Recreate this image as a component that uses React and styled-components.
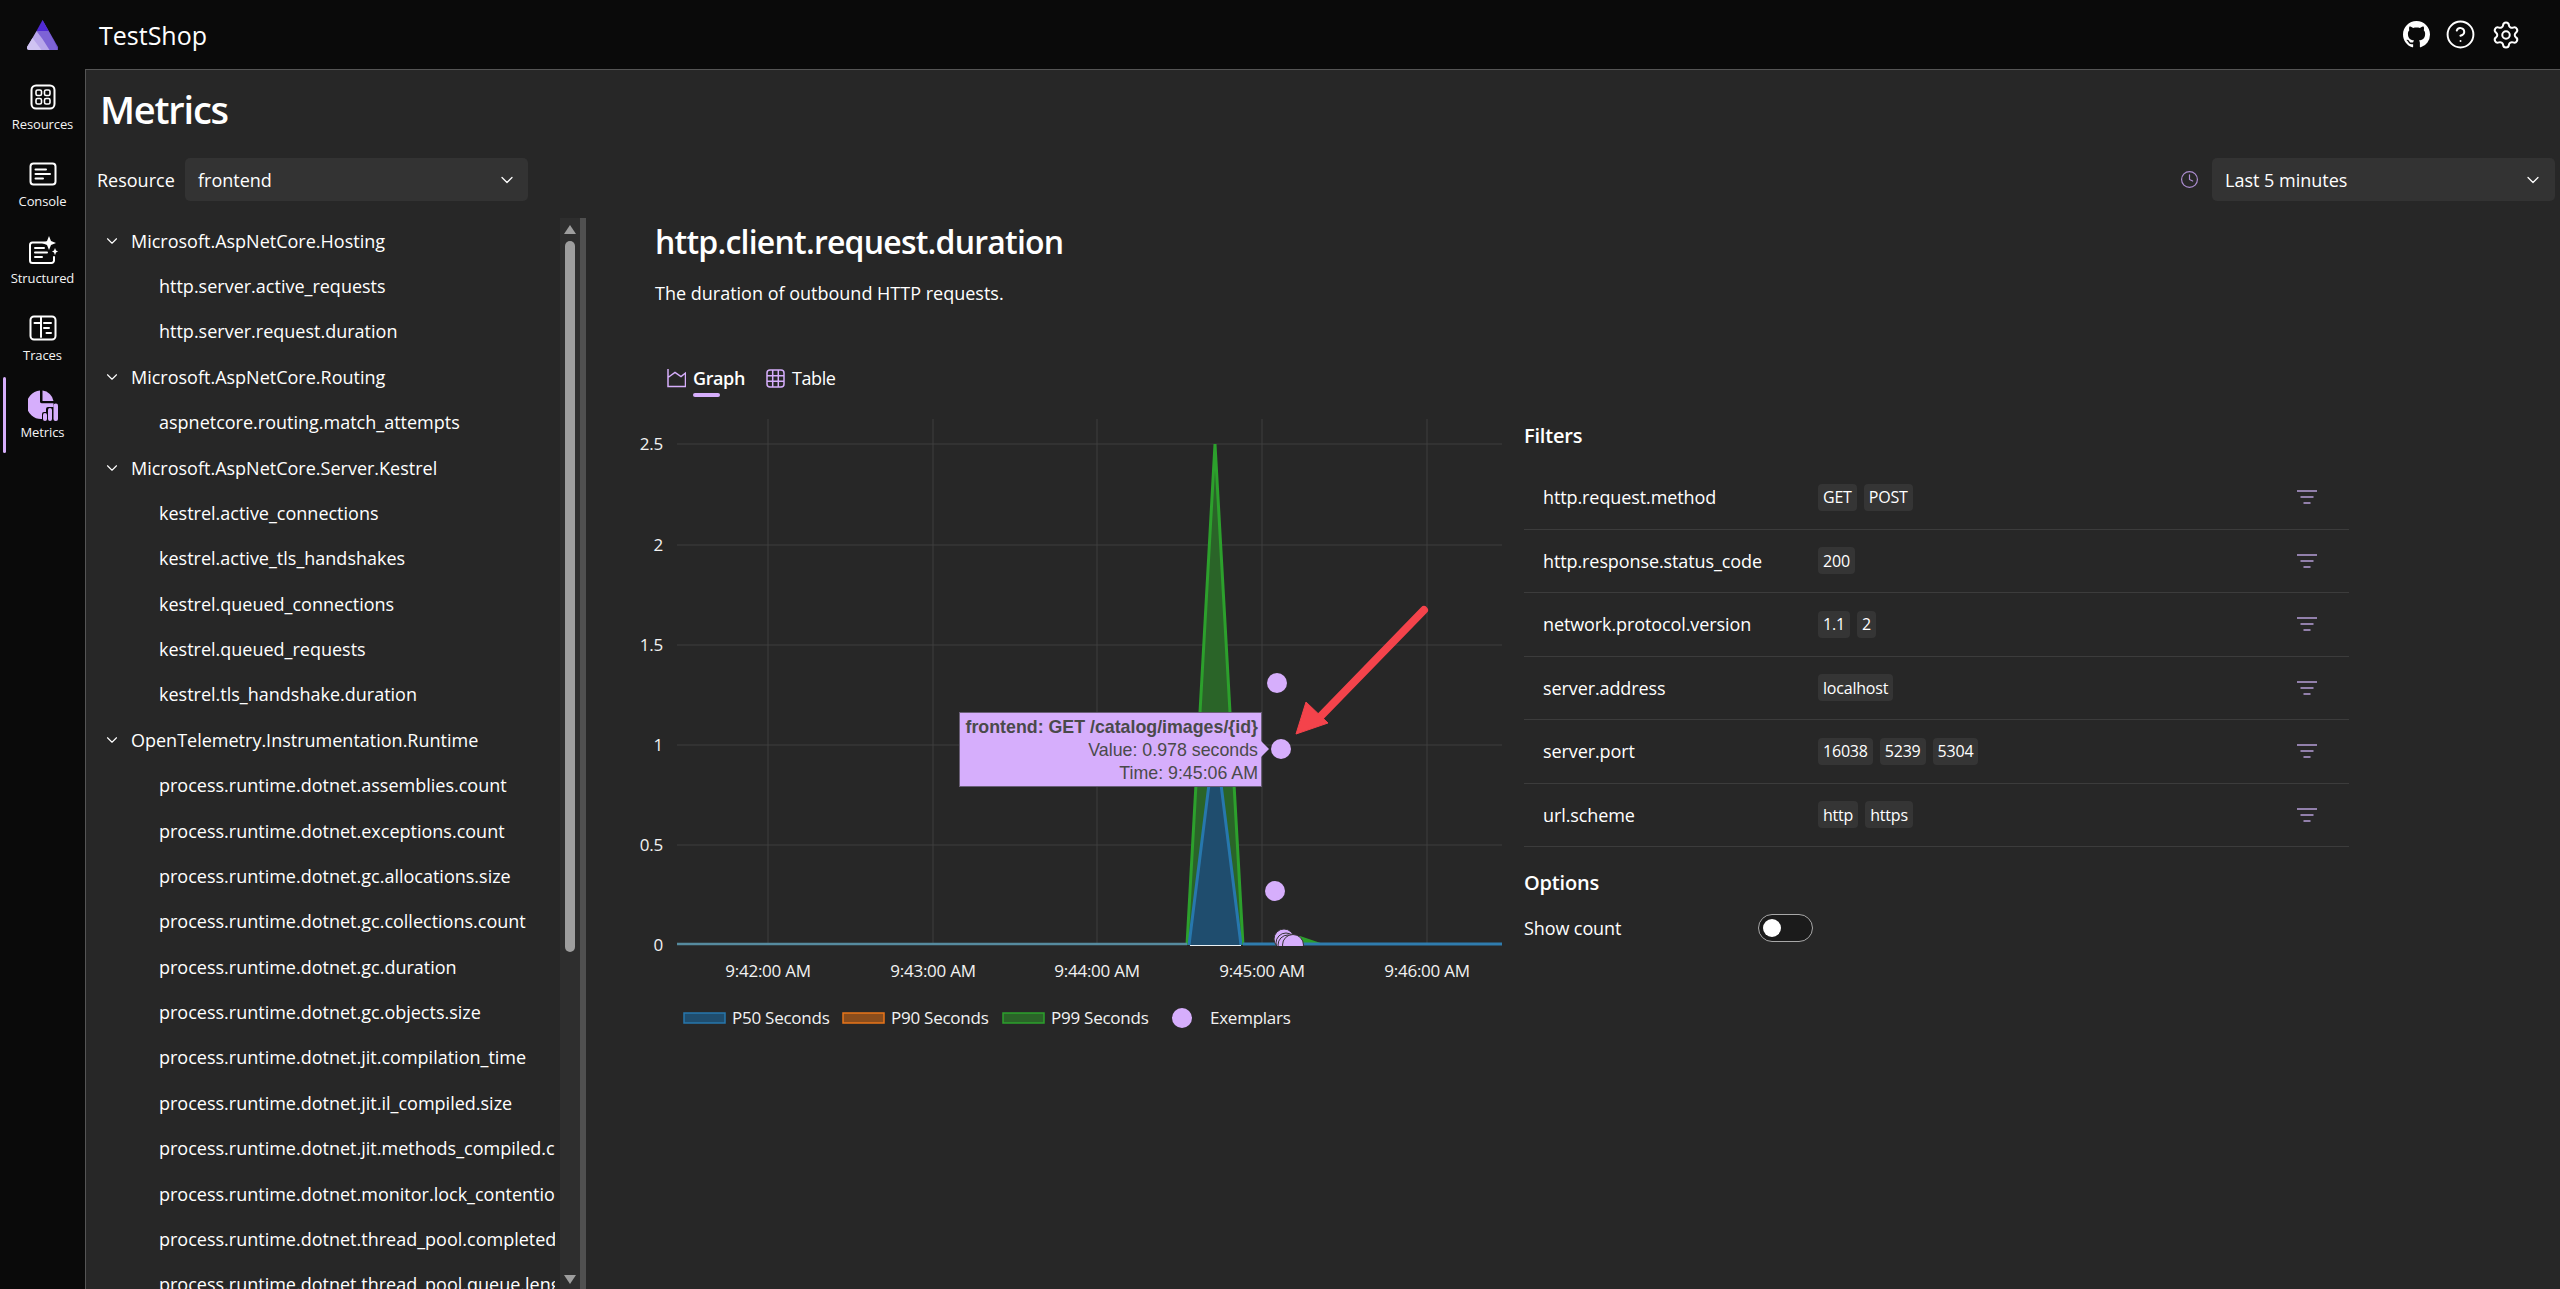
import React from 'react';
import styled, { createGlobalStyle } from 'styled-components';
import { BsGithub } from 'react-icons/bs';
import { ChevronDown, CircleHelp, Clock, Settings } from 'lucide-react';

const accent = '#d6aefc';
const uiFont = '"Open Sans", "Noto Sans", sans-serif';

const GlobalStyle = createGlobalStyle`
  html, body {
    margin: 0;
    height: 1289px;
    overflow: hidden;
    background: #0a0a0a;
    color: #fff;
    font-family: ${uiFont};
  }
  * { box-sizing: border-box; }
`;

const treeData = [
  { name: 'Microsoft.AspNetCore.Hosting', items: ['http.server.active_requests', 'http.server.request.duration'] },
  { name: 'Microsoft.AspNetCore.Routing', items: ['aspnetcore.routing.match_attempts'] },
  {
    name: 'Microsoft.AspNetCore.Server.Kestrel',
    items: [
      'kestrel.active_connections',
      'kestrel.active_tls_handshakes',
      'kestrel.queued_connections',
      'kestrel.queued_requests',
      'kestrel.tls_handshake.duration',
    ],
  },
  {
    name: 'OpenTelemetry.Instrumentation.Runtime',
    items: [
      'process.runtime.dotnet.assemblies.count',
      'process.runtime.dotnet.exceptions.count',
      'process.runtime.dotnet.gc.allocations.size',
      'process.runtime.dotnet.gc.collections.count',
      'process.runtime.dotnet.gc.duration',
      'process.runtime.dotnet.gc.objects.size',
      'process.runtime.dotnet.jit.compilation_time',
      'process.runtime.dotnet.jit.il_compiled.size',
      'process.runtime.dotnet.jit.methods_compiled.count',
      'process.runtime.dotnet.monitor.lock_contention.count',
      'process.runtime.dotnet.thread_pool.completed_items.count',
      'process.runtime.dotnet.thread_pool.queue.length',
    ],
  },
];

const filters = [
  { name: 'http.request.method', values: ['GET', 'POST'] },
  { name: 'http.response.status_code', values: ['200'] },
  { name: 'network.protocol.version', values: ['1.1', '2'] },
  { name: 'server.address', values: ['localhost'] },
  { name: 'server.port', values: ['16038', '5239', '5304'] },
  { name: 'url.scheme', values: ['http', 'https'] },
];

const Logo = () => (
  <svg width="33" height="30" viewBox="0 0 32 30">
    <path d="M16 0 L31.5 27 Q32 30 29 30 L16 30 Z" fill="#6a4bc4" />
    <path d="M16 0 L10 11 L22 11 Z" fill="#512bd4" />
    <path d="M10 11 L22 11 L28 22 L31.5 30 L16 30 Z" fill="#7d63d6" />
    <path d="M10 11 L3 23 L0.5 27 Q0 30 3 30 L23 30 L16 19 Z" fill="#b8a6ea" />
    <path d="M6 18 L0.5 27 Q0 30 3 30 L15 30 Z" fill="#cfc3f2" />
  </svg>
);

const ResourcesIcon = () => (
  <svg width="26" height="26" viewBox="0 0 26 26" fill="none" stroke="#fff" strokeWidth="2">
    <rect x="1.5" y="1.5" width="23" height="23" rx="4.5" />
    <rect x="6" y="6" width="5.5" height="5.5" rx="1.6" strokeWidth="1.6" />
    <rect x="14.5" y="6" width="5.5" height="5.5" rx="1.6" strokeWidth="1.6" />
    <rect x="6" y="14.5" width="5.5" height="5.5" rx="1.6" strokeWidth="1.6" />
    <rect x="14.5" y="14.5" width="5.5" height="5.5" rx="1.6" strokeWidth="1.6" />
  </svg>
);

const ConsoleIcon = () => (
  <svg width="28" height="26" viewBox="0 0 28 26" fill="none" stroke="#fff" strokeWidth="2" strokeLinecap="round">
    <rect x="1.5" y="2.5" width="25" height="21" rx="3" />
    <path d="M6.5 8.5H17M6.5 13H21M6.5 17.5H14" />
  </svg>
);

const StructuredIcon = () => (
  <svg width="30" height="30" viewBox="0 0 30 30" fill="none" stroke="#fff" strokeWidth="2" strokeLinecap="round">
    <path d="M17 6.5H4.5a2.5 2.5 0 0 0-2.5 2.5v15.5a2.5 2.5 0 0 0 2.5 2.5h19a2.5 2.5 0 0 0 2.5-2.5V21" />
    <path d="M7 12H16M7 16.5H19M7 21H14" />
    <path d="M21 0l2 5 5 2-5 2-2 5-2-5-5-2 5-2z" fill="#fff" stroke="none" />
    <path d="M27 12l1 2.6 2 1-2 1-1 2.6-1-2.6-2-1 2-1z" fill="#fff" stroke="none" />
  </svg>
);

const TracesIcon = () => (
  <svg width="28" height="26" viewBox="0 0 28 26" fill="none" stroke="#fff" strokeWidth="2" strokeLinecap="round">
    <rect x="1.5" y="1.5" width="25" height="23" rx="3.5" />
    <path d="M5.5 8H12M12 2v20M15 8H22M15 13H20M17.5 18H22" />
  </svg>
);

const MetricsIcon = () => (
  <svg width="30" height="32" viewBox="0 0 30 32" fill={accent}>
    <path d="M12 1.5v11c0 1 .7 1.7 1.7 1.7H25.5V18H20a2 2 0 0 0-2 2v3h-2a2 2 0 0 0-2 2v5A14 14 0 0 1 12 1.5z" />
    <path d="M14.5 1.5a12.5 12.5 0 0 1 11 10.5h-11z" />
    <rect x="15" y="24" width="4" height="8" rx="2" />
    <rect x="20" y="19" width="4" height="13" rx="2" />
    <rect x="25.5" y="14.5" width="4.5" height="17.5" rx="2" />
  </svg>
);

const GraphIcon = () => (
  <svg width="19" height="20" viewBox="0 0 19 20" fill="none" stroke={accent} strokeWidth="1.5">
    <path d="M1 1V18.5H18.5V5L14 8.5L8 4.5L1 9.5" />
  </svg>
);

const TableIcon = () => (
  <svg width="19" height="19" viewBox="0 0 19 19" fill="none" stroke={accent} strokeWidth="1.5">
    <rect x="1" y="1" width="17" height="17" rx="3" />
    <path d="M6.7 1V18M12.3 1V18M1 6.7H18M1 12.3H18" />
  </svg>
);

const FilterIcon = () => (
  <svg width="20" height="14" viewBox="0 0 20 14" fill="none" stroke="#b79fd8" strokeWidth="1.5">
    <path d="M0 1H20M3.5 7H16.5M6.5 13H13.5" />
  </svg>
);

const navItems = [
  { label: 'Resources', Icon: ResourcesIcon },
  { label: 'Console', Icon: ConsoleIcon },
  { label: 'Structured', Icon: StructuredIcon },
  { label: 'Traces', Icon: TracesIcon },
  { label: 'Metrics', Icon: MetricsIcon, active: true },
];

const yTicks = [
  { label: '2.5', y: 444 },
  { label: '2', y: 545 },
  { label: '1.5', y: 645 },
  { label: '1', y: 745 },
  { label: '0.5', y: 845 },
  { label: '0', y: 945 },
];

const xTicks = [
  { label: '9:42:00 AM', x: 768 },
  { label: '9:43:00 AM', x: 933 },
  { label: '9:44:00 AM', x: 1097 },
  { label: '9:45:00 AM', x: 1262 },
  { label: '9:46:00 AM', x: 1427 },
];

const Chart = () => (
  <ChartSvg viewBox="630 410 880 640" width="880" height="640">
    {yTicks.map((t) => (
      <g key={t.label}>
        {t.y !== 945 && <line x1="677" x2="1502" y1={t.y} y2={t.y} stroke="#3f3f3f" strokeWidth="1" />}
        <text x="663" y={t.y + 6} textAnchor="end" fill="#f2f2f2" fontSize="17">{t.label}</text>
      </g>
    ))}
    {xTicks.map((t) => (
      <g key={t.label}>
        <line x1={t.x} x2={t.x} y1="419" y2="945" stroke="#3f3f3f" strokeWidth="1" />
        <text x={t.x} y="977" textAnchor="middle" fill="#f2f2f2" fontSize="17">{t.label}</text>
      </g>
    ))}

    <path d="M1187 945L1215 444L1243 945Z" fill="#2a6428" />
    <path d="M1187 945L1215 444L1243 945" fill="none" stroke="#2ca02c" strokeWidth="3" />
    <path d="M1285 936L1300 936L1325 944.5L1285 944.5Z" fill="#2ca02c" />
    <path d="M1189 945L1215 736L1241 945Z" fill="#1f4d6e" />
    <path d="M1189 945L1215 736L1241 945" fill="none" stroke="#2777ad" strokeWidth="3" />
    <line x1="677" x2="1187" y1="944" y2="944" stroke="#568b9f" strokeWidth="2.5" />
    <line x1="1243" x2="1502" y1="944" y2="944" stroke="#2f7cae" strokeWidth="3" />
    <line x1="1190" x2="1241" y1="945.5" y2="945.5" stroke="#e8f0f4" strokeWidth="1" />

    <clipPath id="plot">
      <rect x="677" y="419" width="825" height="527" />
    </clipPath>
    <g clipPath="url(#plot)" fill={accent}>
      <circle cx="1277" cy="683" r="10" />
      <circle cx="1275" cy="891" r="10" />
      <circle cx="1284" cy="939" r="10" stroke="#333" strokeWidth="1" />
      <circle cx="1286" cy="943" r="10" stroke="#333" strokeWidth="1" />
      <circle cx="1288" cy="945" r="10" stroke="#333" strokeWidth="1" />
      <circle cx="1293" cy="945" r="10.5" stroke="#333" strokeWidth="1" />
      <circle cx="1281" cy="749" r="10" />
    </g>

    <path d="M1424 610L1318 719" stroke="#f4434b" strokeWidth="8" strokeLinecap="round" />
    <path d="M1296 734L1306 702L1328 723Z" fill="#f4434b" stroke="#f4434b" strokeWidth="1" />

    <rect x="684" y="1013" width="41" height="10" fill="#1f4d6e" stroke="#2777ad" strokeWidth="1.5" />
    <text x="732" y="1024" fill="#f2f2f2" fontSize="17">P50 Seconds</text>
    <rect x="843" y="1013" width="41" height="10" fill="#8a4d1c" stroke="#e8751a" strokeWidth="1.5" />
    <text x="891" y="1024" fill="#f2f2f2" fontSize="17">P90 Seconds</text>
    <rect x="1003" y="1013" width="41" height="10" fill="#2a6428" stroke="#2ca02c" strokeWidth="1.5" />
    <text x="1051" y="1024" fill="#f2f2f2" fontSize="17">P99 Seconds</text>
    <circle cx="1182" cy="1018" r="10" fill={accent} />
    <text x="1210" y="1024" fill="#f2f2f2" fontSize="17">Exemplars</text>
  </ChartSvg>
);

export default function App() {
  return (
    <>
      <GlobalStyle />
      <Shell>
        <TopBar>
          <LogoCell><Logo /></LogoCell>
          <AppName>TestShop</AppName>
          <TopIcons>
            <BsGithub size={27} color="#fff" />
            <CircleHelp size={31} color="#fff" strokeWidth={1.5} />
            <Settings size={30} color="#fff" strokeWidth={1.6} />
          </TopIcons>
        </TopBar>
        <Body>
          <Nav>
            {navItems.map(({ label, Icon, active }) => (
              <NavItem key={label} $active={active}>
                <NavIcon><Icon /></NavIcon>
                <NavLabel>{label}</NavLabel>
              </NavItem>
            ))}
          </Nav>
          <Main>
            <PageTitle>Metrics</PageTitle>
            <Toolbar>
              <ToolbarLabel>Resource</ToolbarLabel>
              <Select>
                frontend
                <ChevronDown size={20} strokeWidth={1.5} />
              </Select>
              <ToolbarSpacer />
              <Clock size={19} color="#ab8ccf" strokeWidth={1.5} />
              <Select $wide>
                Last 5 minutes
                <ChevronDown size={20} strokeWidth={1.5} />
              </Select>
            </Toolbar>
            <Content>
              <TreePane>
                <Tree>
                  {treeData.map((group) => (
                    <React.Fragment key={group.name}>
                      <TreeRow>
                        <TreeChevron><ChevronDown size={18} strokeWidth={1.5} /></TreeChevron>
                        <span>{group.name}</span>
                      </TreeRow>
                      {group.items.map((item) => (
                        <TreeRow key={item} $leaf>{item}</TreeRow>
                      ))}
                    </React.Fragment>
                  ))}
                </Tree>
                <Scrollbar>
                  <ScrollArrow />
                  <ScrollThumb />
                  <ScrollArrow $down />
                </Scrollbar>
                <ScrollEdge />
              </TreePane>
              <Detail>
                <MetricTitle>http.client.request.duration</MetricTitle>
                <MetricDesc>The duration of outbound HTTP requests.</MetricDesc>
                <Tabs>
                  <Tab $active><GraphIcon /><TabText $active>Graph</TabText></Tab>
                  <Tab><TableIcon /><TabText>Table</TabText></Tab>
                </Tabs>
                <ChartRow>
                  <ChartArea>
                    <Chart />
                    <Tooltip>
                      <strong>frontend: GET /catalog/images/{'{id}'}</strong>
                      <span>Value: 0.978 seconds</span>
                      <span>Time: 9:45:06 AM</span>
                    </Tooltip>
                  </ChartArea>
                  <Side>
                    <SideHeading>Filters</SideHeading>
                    <FilterList>
                      {filters.map((f) => (
                        <FilterRow key={f.name}>
                          <FilterName>{f.name}</FilterName>
                          <Chips>
                            {f.values.map((v) => <Chip key={v}>{v}</Chip>)}
                          </Chips>
                          <FilterIcon />
                        </FilterRow>
                      ))}
                    </FilterList>
                    <OptionsHeading>Options</OptionsHeading>
                    <OptionRow>
                      <OptionLabel>Show count</OptionLabel>
                      <Toggle />
                    </OptionRow>
                  </Side>
                </ChartRow>
              </Detail>
            </Content>
          </Main>
        </Body>
      </Shell>
    </>
  );
}

const Shell = styled.div`
  width: 2560px;
  height: 1289px;
  display: flex;
  flex-direction: column;
  overflow: hidden;
`;

const TopBar = styled.header`
  height: 69px;
  flex: none;
  display: flex;
  align-items: center;
  background: #0a0a0a;
`;

const LogoCell = styled.div`
  width: 99px;
  padding-left: 26px;
  display: flex;
`;

const AppName = styled.div`
  font-size: 25px;
  color: #fff;
`;

const TopIcons = styled.div`
  margin-left: auto;
  padding-right: 39px;
  display: flex;
  align-items: center;
  gap: 15px;
`;

const Body = styled.div`
  flex: 1;
  display: flex;
  min-height: 0;
`;

const Nav = styled.nav`
  width: 85px;
  flex: none;
  background: #0a0a0a;
  padding-top: 10px;
`;

const NavItem = styled.div`
  position: relative;
  height: 77px;
  display: flex;
  flex-direction: column;
  align-items: center;

  &::before {
    content: '';
    display: ${(p) => (p.$active ? 'block' : 'none')};
    position: absolute;
    left: 3px;
    top: -10px;
    width: 3px;
    height: 76px;
    border-radius: 2px;
    background: ${accent};
  }
`;

const NavIcon = styled.div`
  height: 36px;
  display: flex;
  align-items: center;
  justify-content: center;
`;

const NavLabel = styled.div`
  font-size: 13px;
  line-height: 18px;
  letter-spacing: -0.1px;
  color: #f4f4f4;
`;

const Main = styled.main`
  flex: 1;
  min-width: 0;
  background: #272727;
  border-top: 1px solid #555;
  border-left: 1px solid #555;
`;

const PageTitle = styled.h1`
  margin: 14px 0 0 14px;
  font-size: 38px;
  line-height: 50px;
  font-weight: 600;
  letter-spacing: -1.2px;
`;

const Toolbar = styled.div`
  margin-top: 24px;
  padding: 0 5px 0 11px;
  display: flex;
  align-items: center;
  font-size: 18px;
`;

const ToolbarLabel = styled.div`
  width: 88px;
`;

const ToolbarSpacer = styled.div`
  flex: 1;
`;

const Select = styled.div`
  width: 343px;
  height: 43px;
  margin-left: ${(p) => (p.$wide ? 13 : 0)}px;
  padding: 0 ${(p) => (p.$wide ? 12 : 11)}px 0 ${(p) => (p.$wide ? 13 : 13)}px;
  display: flex;
  align-items: center;
  justify-content: space-between;
  background: #333;
  border-radius: 5px;
  font-size: 18px;
`;

const Content = styled.div`
  margin-top: 17px;
  display: flex;
  align-items: flex-start;
`;

const TreePane = styled.div`
  width: 500px;
  height: 1071px;
  flex: none;
  display: flex;
`;

const Tree = styled.div`
  width: 469px;
  height: 100%;
  overflow: hidden;
  flex: none;
`;

const TreeRow = styled.div`
  height: 45.38px;
  display: flex;
  align-items: center;
  white-space: nowrap;
  font-size: 18px;
  padding-left: ${(p) => (p.$leaf ? 73 : 17)}px;
`;

const TreeChevron = styled.span`
  width: 28px;
  display: flex;
  align-items: center;
`;

const Scrollbar = styled.div`
  width: 20px;
  margin-left: 5px;
  flex: none;
  background: #2e2e2e;
  display: flex;
  flex-direction: column;
  align-items: center;
  position: relative;
`;

const ScrollArrow = styled.div`
  position: absolute;
  ${(p) => (p.$down ? 'bottom: 5px;' : 'top: 7px;')}
  border-left: 6px solid transparent;
  border-right: 6px solid transparent;
  ${(p) => (p.$down ? 'border-top' : 'border-bottom')}: 9px solid #9e9e9e;
`;

const ScrollThumb = styled.div`
  width: 10px;
  height: 711px;
  margin-top: 23px;
  border-radius: 5px;
  background: #9e9e9e;
`;

const ScrollEdge = styled.div`
  width: 6px;
  flex: none;
  background: #505050;
`;

const Detail = styled.section`
  flex: 1;
  min-width: 0;
  padding-top: 2px;
`;

const MetricTitle = styled.h2`
  margin: 0 0 0 69px;
  font-size: 32px;
  line-height: 44px;
  font-weight: 600;
  letter-spacing: -0.78px;
`;

const MetricDesc = styled.p`
  margin: 17px 0 0 69px;
  font-size: 18px;
  line-height: 24px;
`;

const Tabs = styled.div`
  margin: 55px 0 0 81px;
  height: 36px;
  display: flex;
  align-items: center;
  gap: 21px;
`;

const Tab = styled.div`
  display: flex;
  align-items: center;
  gap: 7px;
`;

const TabText = styled.span`
  position: relative;
  font-size: 18px;
  font-weight: ${(p) => (p.$active ? 600 : 400)};
  letter-spacing: -0.4px;

  &::after {
    content: '';
    display: ${(p) => (p.$active ? 'block' : 'none')};
    position: absolute;
    left: 0;
    bottom: -7px;
    width: 27px;
    height: 4px;
    border-radius: 2px;
    background: ${accent};
  }
`;

const ChartRow = styled.div`
  margin-top: 14px;
  margin-left: 44px;
  display: flex;
  align-items: flex-start;
`;

const ChartArea = styled.div`
  position: relative;
  width: 880px;
  flex: none;
`;

const ChartSvg = styled.svg`
  display: block;
  font-family: ${uiFont};
  letter-spacing: -0.25px;
`;

const Tooltip = styled.div`
  position: absolute;
  left: 329px;
  top: 302px;
  width: 303px;
  height: 75px;
  padding: 3px 3px 0 0;
  display: flex;
  flex-direction: column;
  align-items: flex-end;
  background: ${accent};
  border: 1px solid #6a5f78;
  color: #4a4a4a;
  font-family: "Liberation Sans", Arial, sans-serif;
  font-size: 17.8px;
  line-height: 23px;
  white-space: nowrap;

  strong {
    font-weight: 700;
  }

  &::after {
    content: '';
    position: absolute;
    top: 28px;
    right: -8px;
    border-top: 8px solid transparent;
    border-bottom: 8px solid transparent;
    border-left: 8px solid ${accent};
  }
`;

const Side = styled.aside`
  width: 825px;
  margin-left: 14px;
  padding-top: 12px;
`;

const SideHeading = styled.h3`
  margin: 0;
  font-size: 20px;
  line-height: 28px;
  font-weight: 600;
  letter-spacing: -0.2px;
`;

const OptionsHeading = styled(SideHeading)`
  margin-top: 22px;
`;

const FilterList = styled.div`
  margin-top: 16px;
`;

const FilterRow = styled.div`
  height: 63.5px;
  padding: 0 32px 0 19px;
  display: flex;
  align-items: center;
  border-bottom: 1.5px solid #3c3c3c;
`;

const FilterName = styled.div`
  width: 275px;
  font-size: 18px;
  letter-spacing: -0.1px;
`;

const Chips = styled.div`
  flex: 1;
  display: flex;
  gap: 7px;
`;

const Chip = styled.span`
  height: 27px;
  padding: 0 5px;
  display: flex;
  align-items: center;
  background: #353535;
  border-radius: 4px;
  font-size: 16px;
  letter-spacing: -0.2px;
`;

const OptionRow = styled.div`
  margin-top: 17px;
  display: flex;
  align-items: center;
`;

const OptionLabel = styled.div`
  width: 234px;
  font-size: 18px;
  letter-spacing: -0.1px;
`;

const Toggle = styled.div`
  position: relative;
  width: 55px;
  height: 28px;
  border: 1px solid #a8a8a8;
  border-radius: 14px;
  background: #1b1b1b;

  &::after {
    content: '';
    position: absolute;
    left: 4px;
    top: 4px;
    width: 18px;
    height: 18px;
    border-radius: 50%;
    background: #fff;
  }
`;
